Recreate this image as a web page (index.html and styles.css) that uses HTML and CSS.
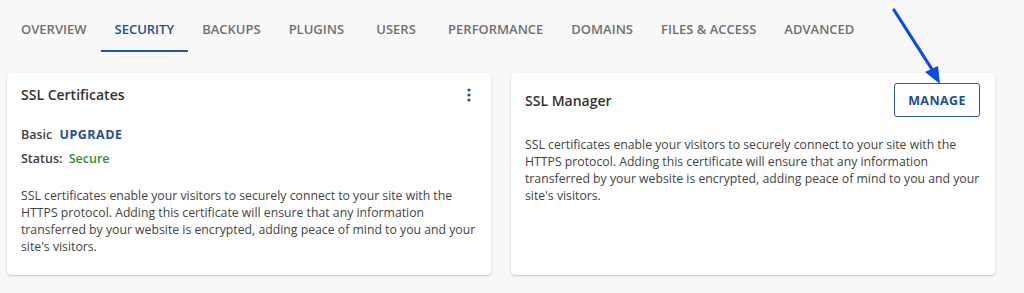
FILE: index.html
```html
<!DOCTYPE html>
<html>
<head>
    <link rel="stylesheet" href="styles.css">
</head>
<body>
    <nav class="tabs">
        <a class="tab">Overview</a>
        <a class="tab active">Security</a>
        <a class="tab">Backups</a>
        <a class="tab">Plugins</a>
        <a class="tab">Users</a>
        <a class="tab">Performance</a>
        <a class="tab">Domains</a>
        <a class="tab">Files &amp; Access</a>
        <a class="tab">Advanced</a>
    </nav>

    <div class="cards">
        <div class="card">
            <div class="card-head cert-head">
                <h2 class="card-title">SSL Certificates</h2>
                <svg class="kebab" width="6" height="14" viewBox="0 0 6 14">
                    <circle cx="3" cy="2" r="1.6"></circle>
                    <circle cx="3" cy="7" r="1.6"></circle>
                    <circle cx="3" cy="12" r="1.6"></circle>
                </svg>
            </div>
            <p class="plan">Basic <span class="upgrade">UPGRADE</span></p>
            <p class="status">Status: <span class="secure">Secure</span></p>
            <p class="desc">SSL certificates enable your visitors to securely connect to your site with the HTTPS protocol. Adding this certificate will ensure that any information transferred by your website is encrypted, adding peace of mind to you and your site's visitors.</p>
        </div>

        <div class="card">
            <div class="card-head manager-head">
                <h2 class="card-title">SSL Manager</h2>
                <button class="manage">MANAGE</button>
            </div>
            <p class="desc manager-desc">SSL certificates enable your visitors to securely connect to your site with the HTTPS protocol. Adding this certificate will ensure that any information transferred by your website is encrypted, adding peace of mind to you and your site's visitors.</p>
        </div>
    </div>

    <svg class="pointer" width="60" height="90" viewBox="0 0 60 90">
        <line x1="6" y1="10" x2="47" y2="74" stroke="#0a4ee0" stroke-width="3.2" stroke-linecap="round"></line>
        <polygon points="52,84 37,72 50,66" fill="#0a4ee0"></polygon>
    </svg>
</body>
</html>
```

FILE: styles.css
```css
body {
    margin: 0;
    background-color: #f8f8f8;
    font-family: "Open Sans", "Liberation Sans", sans-serif;
    color: #3d3d3d;
    position: relative;
    height: 293px;
    overflow: hidden;
}

.tabs {
    display: flex;
    padding: 11px 0 0 7px;
    height: 41px;
}

.tab {
    display: block;
    min-width: 76px;
    padding: 9px 14px 0 14px;
    box-sizing: border-box;
    text-align: center;
    text-transform: uppercase;
    font-size: 13px;
    font-weight: 600;
    letter-spacing: 0;
    color: #707070;
    height: 41px;
    border-bottom: 2px solid transparent;
}

.tab.active {
    color: #274f86;
    border-bottom-color: #2a5595;
}

.cards {
    display: flex;
    gap: 20px;
    padding: 21px 0 0 7px;
}

.card {
    width: 484px;
    height: 202px;
    box-sizing: border-box;
    background-color: #ffffff;
    border-radius: 4px;
    box-shadow: 0 1px 2px rgba(0, 0, 0, 0.22);
    padding: 0 14px;
}

.card-head {
    display: flex;
    justify-content: space-between;
    align-items: center;
}

.cert-head {
    padding: 12px 5px 0 0;
}

.manager-head {
    padding: 10px 0 0 0;
}

.card-title {
    margin: 0;
    font-size: 14px;
    font-weight: 600;
    color: #333333;
}

.kebab {
    fill: #24508e;
}

.plan, .status {
    margin: 0;
    font-size: 12.5px;
    font-weight: 600;
    color: #404040;
}

.plan {
    margin-top: 22px;
}

.status {
    margin-top: 7px;
}

.upgrade {
    color: #23508c;
    font-weight: 700;
    letter-spacing: 0.5px;
    margin-left: 4px;
}

.secure {
    color: #3a8a3a;
    margin-left: 3px;
}

.desc {
    margin: 20px 0 0 0;
    font-size: 12.25px;
    line-height: 17px;
    color: #444444;
}

.manager-desc {
    margin-top: 19px;
}

.manage {
    width: 86px;
    height: 34px;
    background-color: #ffffff;
    border: 1px solid #2f5a99;
    border-radius: 3px;
    color: #23508c;
    font-family: "Open Sans", "Liberation Sans", sans-serif;
    font-size: 12.5px;
    font-weight: 700;
    letter-spacing: 0.4px;
    margin-right: 1px;
}

.pointer {
    position: absolute;
    left: 888px;
    top: 0;
}
```
